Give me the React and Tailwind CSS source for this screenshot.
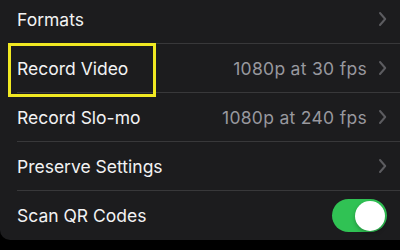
import React from "react";

function Chevron() {
  return (
    <svg width="9" height="16" viewBox="0 0 9 16" className="shrink-0">
      <path d="M2 2 L7.2 8 L2 14" fill="none" stroke="#5c5c60" strokeWidth="2" strokeLinecap="round" strokeLinejoin="round" />
    </svg>
  );
}

function Row({ label, value, chevron = true, toggle = false, last = false }) {
  return (
    <div className="h-[49px] pl-[17px] flex">
      <div className={`flex-1 flex items-center pr-[13px] ${last ? "" : "border-b border-[#38383a]"}`}>
        <span className="text-[17.5px] text-[#f2f2f3] mt-[2px]">{label}</span>
        <div className="flex-1" />
        {value && <span className="text-[17.5px] text-[#98989e] tracking-[0.3px] mr-[11px] mt-[2px]">{value}</span>}
        {chevron && <Chevron />}
        {toggle && (
          <div className="w-[55px] h-[33px] rounded-full bg-[#30c254] flex items-center justify-end pr-[2px]">
            <div className="w-[30px] h-[30px] rounded-full bg-white shadow-[0_2px_4px_rgba(0,0,0,0.25)]" />
          </div>
        )}
      </div>
    </div>
  );
}

export default function App() {
  return (
    <div className="w-[400px] h-[250px] bg-black overflow-hidden relative" style={{ fontFamily: "Inter, 'Noto Sans', sans-serif" }}>
      <div className="bg-[#1c1c1e] -mt-[5px] rounded-bl-[10px] w-full">
        <Row label="Formats" />
        <Row label="Record Video" value="1080p at 30 fps" />
        <Row label="Record Slo-mo" value="1080p at 240 fps" />
        <Row label="Preserve Settings" />
        <Row label="Scan QR Codes" chevron={false} toggle last />
      </div>
      <div className="absolute left-[8px] top-[43px] w-[148px] h-[54px] border-[3px] border-[#f0e822]" />
    </div>
  );
}
